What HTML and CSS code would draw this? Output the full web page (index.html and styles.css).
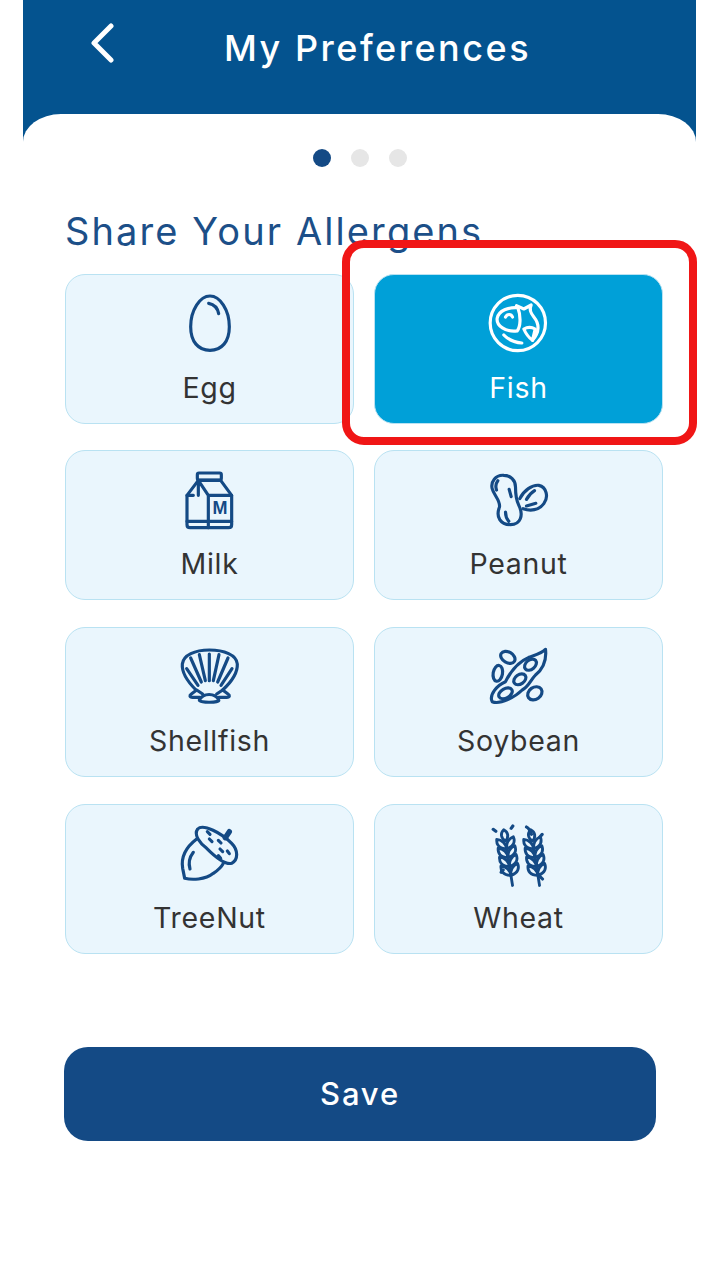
FILE: index.html
```html
<!DOCTYPE html>
<html lang="en">

<head>
    <meta charset="UTF-8">
    <meta name="viewport" content="width=device-width, initial-scale=1.0">
    <title>My Preferences</title>
    <link rel="stylesheet" href="styles.css">
</head>

<body>
    <div class="screen">
        <header class="header">
            <svg class="back" viewBox="0 0 24 40" aria-hidden="true">
                <path d="M21 3 L4 20 L21 37" />
            </svg>
            <h1>My Preferences</h1>
        </header>

        <main class="panel">
            <div class="dots">
                <span class="dot active"></span>
                <span class="dot"></span>
                <span class="dot"></span>
            </div>

            <h2>Share Your Allergens</h2>

            <div class="grid">
                <div class="item">
                    <svg class="icon" viewBox="0 0 360 240" aria-hidden="true">
                        <path d="M180 33 C150 33 122 75 122 125 C122 170 145 196 180 196 C215 196 238 170 238 125 C238 75 210 33 180 33 Z" />
                        <path d="M176 55 C192 58 203 70 206 86" />
                    </svg>
                    <span>Egg</span>
                </div>

                <div class="item selected">
                    <svg class="icon" viewBox="-4.5 0 360 240" aria-hidden="true">
                        <circle cx="172" cy="114" r="83" />
                        <path d="M172 68 C145 66 114 76 110 100 C107 122 135 142 170 138 C180 125 182 95 172 68 Z" />
                        <path d="M172 68 L168 62 L190 72 L212 60 C206 72 210 84 220 96 C238 118 238 140 216 166" />
                        <path d="M190 132 C200 126 214 126 224 132 L216 166 C205 158 196 146 190 132 Z" />
                        <path d="M135 96 C140 86 152 86 156 96" />
                        <path d="M130 150 C145 166 162 172 184 174" />
                    </svg>
                    <span>Fish</span>
                </div>

                <div class="item">
                    <svg class="icon" viewBox="0 -3 360 240" aria-hidden="true">
                        <rect x="142" y="33" width="72" height="21" rx="5" />
                        <path d="M111 100 L145 55 H212 L245 100 V188 Q245 197 236 197 H120 Q111 197 111 188 Z" />
                        <path d="M145 55 L175 100 V197 M175 100 H245 M111 100 H130 M145 60 V100 M111 178 H245" />
                        <text class="carton" x="210" y="157" text-anchor="middle">M</text>
                    </svg>
                    <span>Milk</span>
                </div>

                <div class="item">
                    <svg class="icon" viewBox="-4.5 -3 360 240" aria-hidden="true">
                        <path d="M130 40 C105 38 90 60 95 80 C100 100 120 115 117 135 C105 165 120 188 150 188 C180 188 190 160 175 130 C165 110 165 95 165 75 C165 55 150 40 130 40 Z" />
                        <path d="M178 110 C190 85 215 68 235 70 C258 75 265 105 250 125 C235 145 210 148 188 140" />
                        <path d="M112 56 C105 65 105 75 108 84 M146 82 L152 104 M135 150 C135 160 138 170 145 178 M198 112 C205 100 212 92 222 86 M198 132 L226 124" />
                    </svg>
                    <span>Peanut</span>
                </div>

                <div class="item">
                    <svg class="icon" viewBox="0 -6 360 240" aria-hidden="true">
                        <path d="M138 150 C110 122 95 95 97 72 C100 45 135 30 178 30 C222 30 260 45 262 72 C263 95 245 125 218 150" />
                        <path d="M178 122 V42 M166 122 L148 44 M190 122 L207 44 M154 126 L122 54 M203 126 L234 54 M144 136 L110 86 M213 136 L246 86" />
                        <path d="M148 180 C160 158 195 158 206 180 C212 188 148 190 148 180 Z" />
                        <path d="M150 172 H128 C118 172 118 166 124 162 L140 150 L158 162" />
                        <path d="M206 172 H230 C240 172 240 166 234 162 L218 150 L200 162" />
                    </svg>
                    <span>Shellfish</span>
                </div>

                <div class="item">
                    <svg class="icon" viewBox="-4.5 -6 360 240" aria-hidden="true">
                        <path d="M95 185 C85 165 110 135 135 125 C150 95 175 65 205 52 C225 45 245 40 255 28 C258 55 250 85 225 105 C210 120 205 140 185 150 C165 170 120 195 95 185 Z" />
                        <ellipse cx="210" cy="74" rx="20" ry="14" transform="rotate(-40 210 74)" />
                        <ellipse cx="178" cy="118" rx="20" ry="14" transform="rotate(-35 178 118)" />
                        <ellipse cx="135" cy="160" rx="22" ry="14" transform="rotate(-30 135 160)" />
                        <ellipse cx="142" cy="52" rx="23" ry="16" transform="rotate(30 142 52)" />
                        <ellipse cx="112" cy="100" rx="14" ry="24" transform="rotate(10 112 100)" />
                        <ellipse cx="223" cy="160" rx="23" ry="18" transform="rotate(-35 223 160)" />
                    </svg>
                    <span>Soybean</span>
                </div>

                <div class="item">
                    <svg class="icon" viewBox="0 0 360 240" aria-hidden="true">
                        <path d="M143 42 C160 25 215 55 245 85 C265 105 265 135 245 145 C225 150 190 120 170 100 C150 85 130 60 143 42 Z" />
                        <path d="M226 68 L238 50" class="thick" />
                        <path d="M140 72 C110 95 92 125 98 160 L104 190 C125 195 165 195 190 175 C205 165 215 155 220 145" />
                        <path d="M130 112 C120 125 115 145 120 162" />
                        <path d="M172 50 L180 58 M178 72 L186 80 M205 76 L213 84 M210 102 L218 110 M232 108 L238 116 M205 122 L212 130" />
                    </svg>
                    <span>TreeNut</span>
                </div>

                <div class="item">
                    <svg class="icon" viewBox="-4.5 0 360 240" aria-hidden="true">
                        <defs>
                            <g id="ear">
                                <path d="M0 0 C-14 -12 -14 -28 0 -38 C14 -28 14 -12 0 0 Z" />
                                <g id="pair">
                                    <path d="M0 26 C-26 22 -32 6 -28 -10 C-10 -6 0 10 0 26 Z" />
                                    <path d="M0 26 C26 22 32 6 28 -10 C10 -6 0 10 0 26 Z" />
                                </g>
                                <use href="#pair" y="30" />
                                <use href="#pair" y="60" />
                                <use href="#pair" y="90" />
                                <path d="M0 26 V150" />
                            </g>
                        </defs>
                        <use href="#ear" transform="translate(135 78) rotate(-9) scale(.9)" />
                        <use href="#ear" transform="translate(216 78) rotate(-9) scale(.9)" />
                        <path d="M98 43 L106 49 M152 40 L157 33 M238 66 L245 58 M122 172 L128 165 M238 184 L246 192 M198 36 C205 40 210 48 213 58" />
                    </svg>
                    <span>Wheat</span>
                </div>
            </div>

            <button type="button" class="save">Save</button>
        </main>
    </div>

    <div class="highlight"></div>
</body>

</html>
```

FILE: styles.css
```css
* {
    margin: 0;
    padding: 0;
    box-sizing: border-box;
    font-family: Inter, 'Noto Sans', sans-serif;
}

body {
    min-height: 1280px;
    background: white;
    position: relative;
}

.screen {
    margin: 0 24px 0 23px;
    min-height: 1280px;
    display: flex;
    flex-direction: column;
    background: #04538f;
}

.header {
    height: 114px;
    padding: 23px 0 0 67px;
    display: flex;
    align-items: flex-start;
    color: white;
}

.back {
    width: 24px;
    height: 40px;
    fill: none;
    stroke: white;
    stroke-width: 5;
    stroke-linecap: round;
    stroke-linejoin: round;
}

.header h1 {
    margin: 3px 0 0 110px;
    font-size: 36px;
    line-height: 44px;
    font-weight: 500;
    letter-spacing: 2.5px;
    white-space: nowrap;
}

.panel {
    flex: 1;
    padding: 35px 33px 0 42px;
    background: white;
    border-radius: 38px 38px 0 0 / 28px 28px 0 0;
}

.dots {
    margin-left: -42px;
    margin-right: -33px;
    display: flex;
    justify-content: center;
    gap: 20px;
}

.dot {
    width: 18px;
    height: 18px;
    border-radius: 50%;
    background: #e6e6e6;
}

.dot.active {
    background: #144a85;
}

h2 {
    margin-top: 41px;
    height: 65.8px;
    font-size: 38px;
    line-height: 46px;
    font-weight: 400;
    letter-spacing: 2.1px;
    color: #1c4f88;
    white-space: nowrap;
}

.grid {
    display: grid;
    grid-template-columns: 289px 289px;
    grid-auto-rows: 150px;
    column-gap: 20px;
    row-gap: 26.6px;
}

.item {
    padding-top: 10px;
    display: flex;
    flex-direction: column;
    align-items: center;
    background: #eaf6fd;
    border: 1.5px solid #b9e2f2;
    border-radius: 20px;
    color: #333;
}

.item span {
    margin-top: 6px;
    font-size: 28.5px;
    line-height: 34px;
    letter-spacing: 0.7px;
}

.icon {
    width: 120px;
    height: 80px;
    fill: none;
    stroke: #144a85;
    stroke-width: 9.5;
    stroke-linecap: round;
    stroke-linejoin: round;
}

.icon .thick {
    stroke-width: 16;
}

.carton {
    font-family: 'Liberation Sans', sans-serif;
    font-size: 54px;
    font-weight: 700;
    fill: #144a85;
    stroke: none;
}

.item.selected {
    background: #00a0d8;
    color: white;
}

.item.selected .icon {
    stroke: white;
}

.save {
    display: block;
    width: 592px;
    height: 94px;
    margin: 93.4px 0 0 -1px;
    background: #144a85;
    color: white;
    border: none;
    border-radius: 24px;
    font-size: 31px;
    font-weight: 500;
    letter-spacing: 1.8px;
    cursor: pointer;
}

/* red marker drawn over the screenshot */
.highlight {
    position: absolute;
    left: 342px;
    top: 240px;
    width: 355px;
    height: 205px;
    border: 8px solid #f01616;
    border-radius: 22px;
}
```
